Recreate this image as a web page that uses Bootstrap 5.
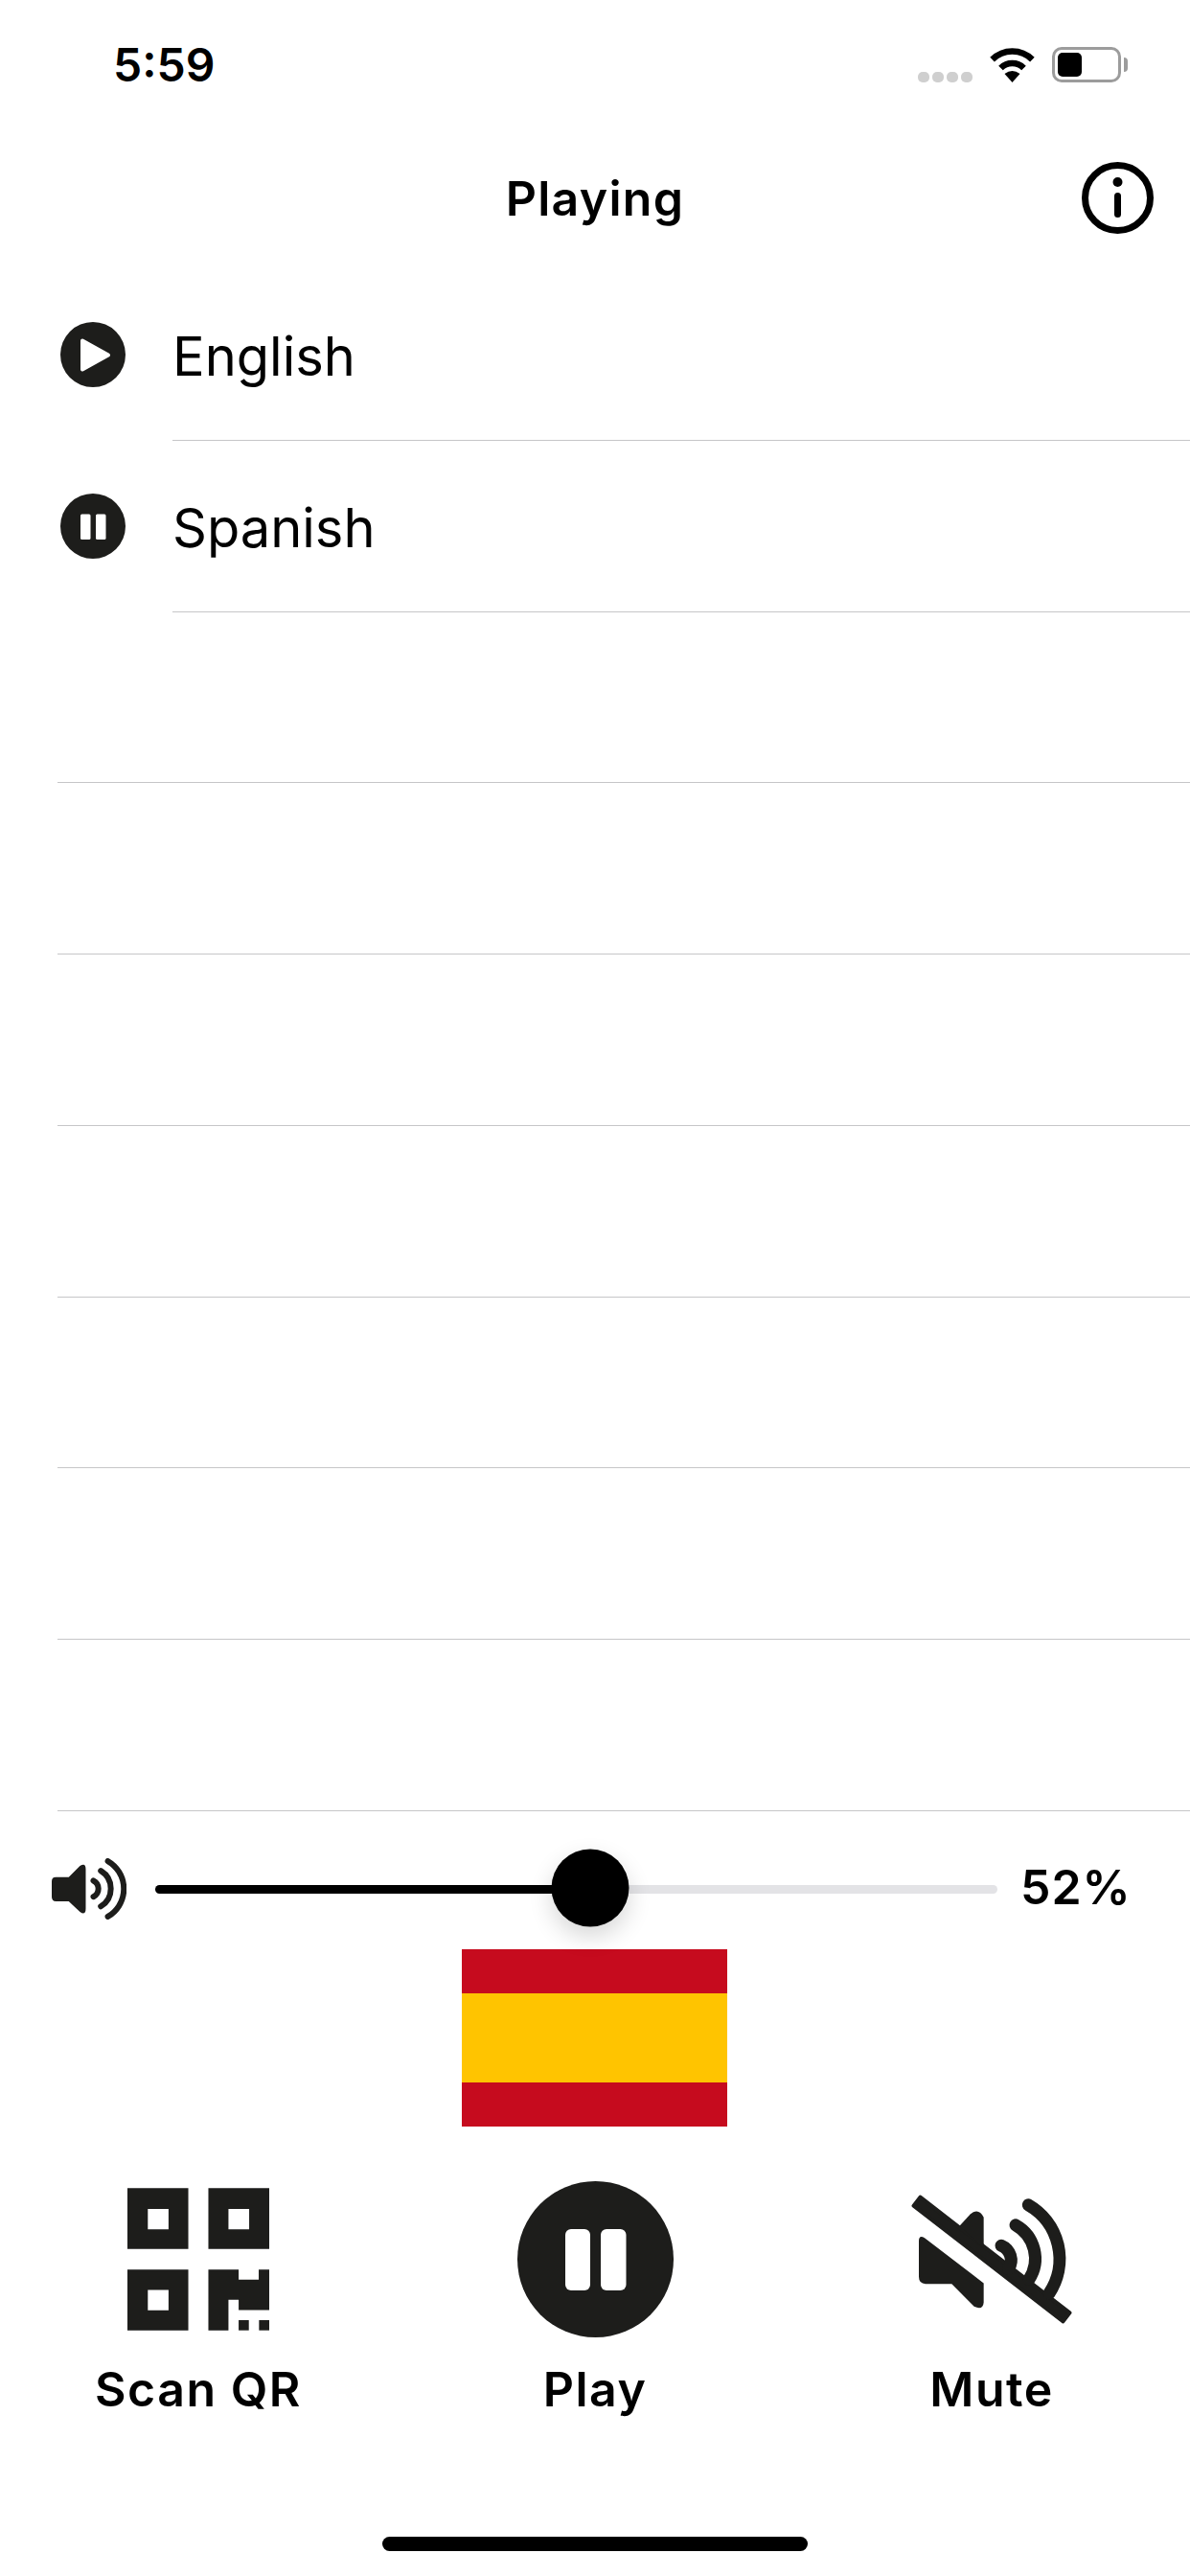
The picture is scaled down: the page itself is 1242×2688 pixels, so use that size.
<!DOCTYPE html>
<html lang="en">
<head>
<meta charset="utf-8">
<title>Playing</title>
<link href="https://cdn.jsdelivr.net/npm/bootstrap@5.3.0/dist/css/bootstrap.min.css" rel="stylesheet">
<style>
html,body{margin:0;background:#fff;color:#000;}
.phone{width:1242px;height:2688px;background:#fff;overflow:hidden;font-family:Inter,"Liberation Sans",sans-serif;}
.status-bar{height:132px;padding:49px 65px 0 118px;}
.clock{font-size:48px;font-weight:600;line-height:37px;}
.status-icons{gap:18px;height:37px;}
.signal-dots{gap:3px;}
.signal-dots i{display:block;width:12px;height:11px;border-radius:5px;background:#cfcfcf;}
.battery{width:72px;height:37px;border:3px solid #9c9c9c;border-radius:10px;padding:3px;}
.battery-level{width:25px;height:25px;background:#000;border-radius:5px;}
.battery-tip{width:4px;height:15px;background:#9c9c9c;border-radius:0 4px 4px 0;margin-left:3px;}
.title-bar{height:149px;display:grid;grid-template-columns:1fr auto 1fr;align-items:center;padding:0 38px;}
.title-text{font-size:50px;font-weight:600;margin:0;line-height:60px;letter-spacing:1.3px;}
.info-btn{justify-self:end;line-height:0;}
.lang-list{--bs-list-group-border-radius:0;}
.lang-row{height:178.75px;padding:0;border:0;background:transparent;color:#000;}
.lang-icon{width:180px;padding-left:63px;line-height:0;}
.lang-body{border-bottom:1px solid #c6c6c8;font-size:56px;line-height:1;padding-top:4px;}
.lang-body.blank{margin-left:60px;}
.volume-row{height:144px;padding:20px 40px 0 54px;}
.volume-icon{line-height:0;margin-right:30px;}
.volume-track{width:879px;height:9px;border-radius:5px;background:#e3e3e6;}
.volume-fill{height:9px;background:#000;border-radius:5px;}
.volume-thumb{width:81px;height:81px;border-radius:50%;background:#000;top:50%;transform:translate(-50%,-50%);margin-top:-2px;box-shadow:0 10px 24px rgba(0,0,0,.16);}
.volume-value{font-size:50px;font-weight:600;line-height:1;margin-left:24px;margin-top:-6px;letter-spacing:1px;}
.flag{width:277px;height:185px;margin:0 auto 0 482px;}
.flag-red{height:46px;background:#c60b1e;}
.flag-yellow{height:93px;background:#ffc400;}
.controls{margin-top:57px;}
.control-icon{height:163px;line-height:0;}
.control-label{font-size:50px;font-weight:600;line-height:60px;margin-top:24px;letter-spacing:1.5px;}
.home-bar{width:444px;height:15px;border-radius:8px;background:#000;margin:0 auto 26px;}
</style>
</head>
<body>
<div class="phone d-flex flex-column">
  <div class="status-bar d-flex justify-content-between align-items-start">
    <div class="clock">5:59</div>
    <div class="status-icons d-flex align-items-end">
      <div class="signal-dots d-flex"><i></i><i></i><i></i><i></i></div>
      <svg width="47" height="36" viewBox="0 0 47 36"><path d="M2.6 12.1A29.5 29.5 0 0 1 44.4 12.1M11.5 21A17 17 0 0 1 35.5 21" fill="none" stroke="#000" stroke-width="6.5"/><path d="M23.5 36L15.5 27Q23.5 21 31.5 27Z" fill="#000"/></svg>
      <div class="d-flex align-items-center">
        <div class="battery"><div class="battery-level"></div></div>
        <div class="battery-tip"></div>
      </div>
    </div>
  </div>

  <div class="title-bar">
    <div></div>
    <h1 class="title-text">Playing</h1>
    <div class="info-btn">
      <svg width="75" height="75" viewBox="0 0 75 75"><circle cx="37.5" cy="37.5" r="34" fill="none" stroke="#000" stroke-width="7"/><circle cx="37.5" cy="21" r="5" fill="#000"/><rect x="34" y="32" width="7" height="26" rx="3.5" fill="#000"/></svg>
    </div>
  </div>

  <div class="list-group lang-list">
    <div class="list-group-item lang-row d-flex">
      <div class="lang-icon d-flex align-items-center">
        <svg width="68" height="68" viewBox="0 0 68 68"><circle cx="34" cy="34" r="34" fill="#1d1d1b"/><path d="M23 19.5L50 34.500L23 49.500Z" fill="#fff" stroke="#fff" stroke-width="4" stroke-linejoin="round"/></svg>
      </div>
      <div class="lang-body flex-grow-1 d-flex align-items-center">English</div>
    </div>
    <div class="list-group-item lang-row d-flex">
      <div class="lang-icon d-flex align-items-center">
        <svg width="68" height="68" viewBox="0 0 68 68"><circle cx="34" cy="34" r="34" fill="#1d1d1b"/><rect x="21" y="21.5" width="10.5" height="26.5" rx="1.5" fill="#fff"/><rect x="37" y="21.5" width="10.5" height="26.5" rx="1.5" fill="#fff"/></svg>
      </div>
      <div class="lang-body flex-grow-1 d-flex align-items-center">Spanish</div>
    </div>
    <div class="list-group-item lang-row d-flex"><div class="lang-body blank flex-grow-1"></div></div>
    <div class="list-group-item lang-row d-flex"><div class="lang-body blank flex-grow-1"></div></div>
    <div class="list-group-item lang-row d-flex"><div class="lang-body blank flex-grow-1"></div></div>
    <div class="list-group-item lang-row d-flex"><div class="lang-body blank flex-grow-1"></div></div>
    <div class="list-group-item lang-row d-flex"><div class="lang-body blank flex-grow-1"></div></div>
    <div class="list-group-item lang-row d-flex"><div class="lang-body blank flex-grow-1"></div></div>
    <div class="list-group-item lang-row d-flex"><div class="lang-body blank flex-grow-1"></div></div>
  </div>

  <div class="volume-row d-flex align-items-center">
    <div class="volume-icon flex-shrink-0">
      <svg width="78" height="65" viewBox="72 88 233 194"><path d="M72 160Q72 147 85 147L125 147L160 112Q178 100 178 122L178 245Q178 268 160 255L125 222L85 222Q72 222 72 208Z" fill="#1d1d1b"/><path d="M202 158A28 28 0 0 1 202 208M225 127A65 65 0 0 1 225 238M247 97A100 100 0 0 1 247 270" fill="none" stroke="#1d1d1b" stroke-width="18" stroke-linecap="round"/></svg>
    </div>
    <div class="volume-track flex-shrink-0 position-relative">
      <div class="volume-fill" style="width:51.65%"></div>
      <div class="volume-thumb position-absolute" style="left:51.65%"></div>
    </div>
    <div class="volume-value">52%</div>
  </div>

  <div class="flag">
    <div class="flag-red"></div>
    <div class="flag-yellow"></div>
    <div class="flag-red"></div>
  </div>

  <div class="row g-0 controls text-center">
    <div class="col-4">
      <div class="control-icon d-flex align-items-center justify-content-center">
        <svg width="148" height="149" viewBox="218 130 445 446"><g fill="#1d1d1b"><path fill-rule="evenodd" d="M218 130H409V321H218ZM282 195V259H347V195Z"/><path fill-rule="evenodd" d="M472 130H663V321H472ZM535 195V259H600V195Z"/><path fill-rule="evenodd" d="M218 385H409V576H218ZM282 449V513H347V449Z"/><path d="M472 385H567V417H630V385H663V512H567V480H535V576H472Z"/><rect x="567" y="544" width="32" height="32"/><rect x="631" y="544" width="32" height="32"/></g></svg>
      </div>
      <div class="control-label">Scan QR</div>
    </div>
    <div class="col-4">
      <div class="control-icon d-flex align-items-center justify-content-center">
        <svg width="163" height="163" viewBox="0 0 163 163"><circle cx="81.5" cy="81.5" r="81.5" fill="#1d1d1b"/><rect x="50" y="50" width="26" height="64" rx="6" fill="#fff"/><rect x="87" y="50" width="26.5" height="64" rx="6" fill="#fff"/></svg>
      </div>
      <div class="control-label">Play</div>
    </div>
    <div class="col-4">
      <div class="control-icon d-flex align-items-center justify-content-center">
        <svg width="170" height="137" viewBox="150 150 510 410"><g fill="#1d1d1b"><path d="M181.400 160.600L649.400 522.600L628.600 549.400L160.600 187.400Z" stroke="#1d1d1b" stroke-width="12" stroke-linejoin="round"/><path d="M305 250L338 214Q364 192 380 224L380 320Z"/><path d="M177 298Q177 277 195 288L380 430L380 490Q378 516 350 503L280 432L198 432Q177 432 177 410Z"/></g><g fill="none" stroke="#1d1d1b" stroke-width="39" stroke-linecap="round"><path d="M520 185A195 195 0 0 1 585 462"/><path d="M480 248A120 120 0 0 1 522 418"/><path d="M435 312A50 50 0 0 1 458 385"/></g></svg>
      </div>
      <div class="control-label">Mute</div>
    </div>
  </div>

  <div class="home-bar mt-auto"></div>
</div>
<script src="https://cdn.jsdelivr.net/npm/bootstrap@5.3.0/dist/js/bootstrap.bundle.min.js"></script>
</body>
</html>
